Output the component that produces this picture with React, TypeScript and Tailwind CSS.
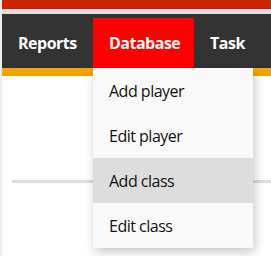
import React from 'react'

const tabs = [
  { label: 'Reports', width: 'w-[91px]' },
  { label: 'Database', width: 'w-[101px]' },
  { label: 'Task', width: 'w-[64px]' },
]
const items = ['Add player', 'Edit player', 'Add class', 'Edit class']

function App() {
  return (
    <div className="relative flex h-[256px] w-[271px] overflow-hidden bg-white font-['Open_Sans',sans-serif]">
      <div className="w-[2px] shrink-0 bg-[#eeeeee]" />
      <div className="flex flex-1 flex-col">
        <div className="h-[9px] bg-[#cc2200]" />
        <div className="h-[5px] bg-[#dfdee3]" />
        <nav className="flex h-[54px] items-end bg-[#333333]">
          {tabs.map(tab => (
            <div
              key={tab.label}
              className={`flex h-[50px] shrink-0 items-center whitespace-nowrap px-4 text-[16px] font-bold tracking-[-0.5px] text-white ${tab.width} ${tab.label === 'Database' ? 'bg-[#ff0000]' : ''}`}
            >
              {tab.label}
            </div>
          ))}
        </nav>
        <div className="h-[8px] bg-gradient-to-b from-[#f7a800] to-[#f0a000]" />
        <div className="pl-[10px] pt-[104px]">
          <div className="h-[3px] bg-[#dcdce1]" />
        </div>
      </div>

      <div className="absolute left-[93px] top-[68px] w-[160px] bg-[#f9f9f9] shadow-[2px_4px_10px_rgba(0,0,0,0.22)]">
        {items.map(item => (
          <div
            key={item}
            className={`flex h-[45px] items-center px-4 text-[16px] tracking-[-0.5px] text-[#111] ${item === 'Add class' ? 'bg-[#dddddd]' : ''}`}
          >
            {item}
          </div>
        ))}
      </div>
    </div>
  )
}

export default App
